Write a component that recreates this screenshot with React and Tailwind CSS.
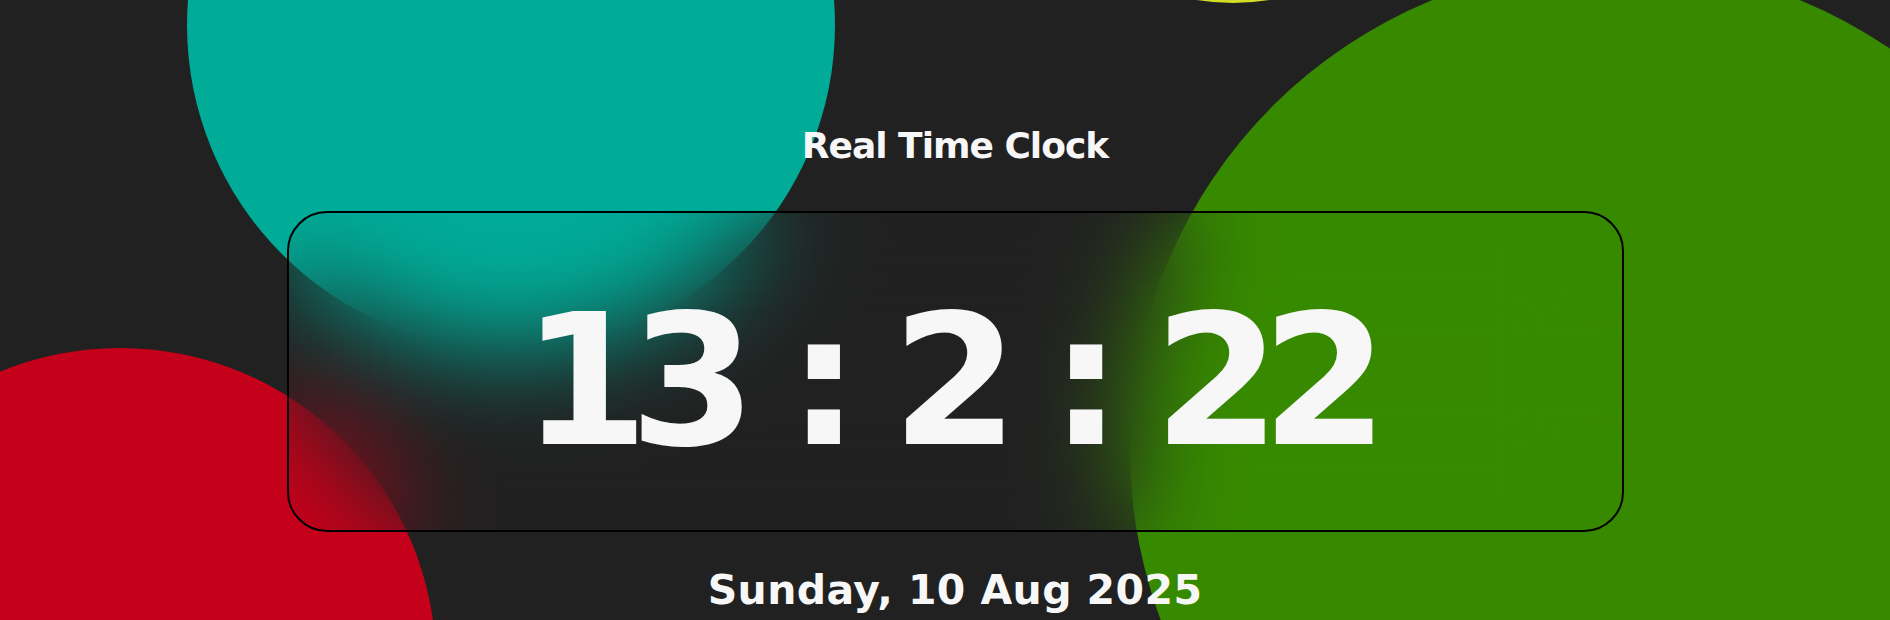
import React from 'react';

export default function App() {
  return (
    <div className="relative w-[1890px] h-[620px] overflow-hidden bg-[#212121] font-['DejaVu_Sans','Liberation_Sans',sans-serif] text-[#f7f7f7]">
      {/* Background blobs */}
      <div className="absolute left-[187px] top-[-299px] w-[648px] h-[648px] rounded-full bg-[#00ab98]" />
      <div className="absolute left-[-196px] top-[348px] w-[632px] h-[632px] rounded-full bg-[#c4001a]" />
      <div className="absolute left-[1130px] top-[-36px] w-[972px] h-[972px] rounded-full bg-[#378a00]" />
      <div className="absolute left-[1010px] top-[-443px] w-[446px] h-[446px] rounded-full bg-[#d4dc28]" />

      {/* Clock */}
      <div className="relative flex flex-col items-center pl-[20px] pt-[128px]">
        <h1 className="text-[36px] leading-none font-bold tracking-[-1px]">Real Time Clock</h1>

        <div className="mt-[47px] w-[1337px] h-[321px] rounded-[40px] border-2 border-black backdrop-blur-[52px] flex justify-center pt-[77px]">
          <div className="text-[182px] leading-none font-bold whitespace-pre tracking-[-19px] [word-spacing:6px] pr-[19px]">
            13 : 2 : 22
          </div>
        </div>

        <p className="mt-[38px] text-[41px] leading-none font-bold tracking-[0.4px]">
          Sunday, 10 Aug 2025
        </p>
      </div>
    </div>
  );
}
